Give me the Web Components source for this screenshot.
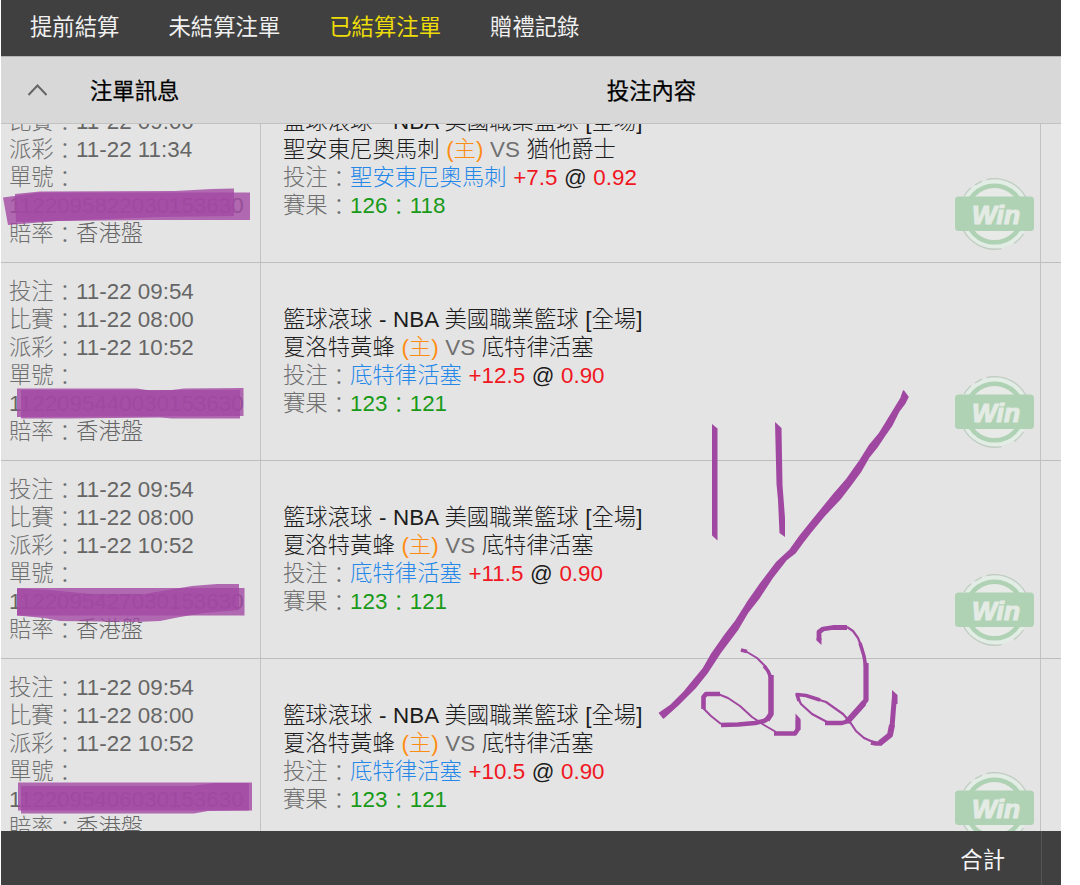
<!DOCTYPE html>
<html lang="zh-Hant">
<head>
<meta charset="utf-8">
<title>已結算注單</title>
<style>
    body {
        margin: 0;
        background: #fff;
        font: 22.36px/28px "Liberation Sans", "Noto Sans CJK TC", sans-serif;
    }
</style>
</head>
<body>
<bet-history>
    <tab-bar slot="tabs">
        <tab-item>提前結算</tab-item>
        <tab-item>未結算注單</tab-item>
        <tab-item active>已結算注單</tab-item>
        <tab-item>贈禮記錄</tab-item>
    </tab-bar>
    <table-head slot="head">
        <span slot="info">注單訊息</span>
        <span slot="content">投注內容</span>
    </table-head>
    <bet-row start="09:00" settle="11:34" number="1122095822030153630" home="聖安東尼奧馬刺" away="猶他爵士" pick="聖安東尼奧馬刺" line="+7.5" odds="0.92" score="126：118"></bet-row>
    <bet-row placed="09:54" start="08:00" settle="10:52" number="1122095440030153630" home="夏洛特黃蜂" away="底特律活塞" pick="底特律活塞" line="+12.5" odds="0.90" score="123：121"></bet-row>
    <bet-row placed="09:54" start="08:00" settle="10:52" number="1122095427030153630" home="夏洛特黃蜂" away="底特律活塞" pick="底特律活塞" line="+11.5" odds="0.90" score="123：121"></bet-row>
    <bet-row placed="09:54" start="08:00" settle="10:52" number="1122095406030153630" home="夏洛特黃蜂" away="底特律活塞" pick="底特律活塞" line="+10.5" odds="0.90" score="123：121"></bet-row>
    <total-bar slot="total">合計</total-bar>
</bet-history>
<marker-ink></marker-ink>

<script>
function define(name, html, setup) {
    const tmp = document.createElement('template');
    tmp.innerHTML = html;

    customElements.define(name, class extends HTMLElement {
        constructor() {
            super();
            this.attachShadow({mode: 'open'});
            this.shadowRoot.appendChild(document.importNode(tmp.content, true));
        }

        connectedCallback() {
            if (setup) {
                setup(this, this.shadowRoot);
            }
        }
    });
}

define('bet-history', `
    <style>
        :host {
            display: flex;
            flex-direction: column;
            width: 1060px;
            height: 885px;
            margin-left: 1px;
            background: #e4e4e4;
            overflow: hidden;
        }
        .rows {
            flex: 1;
            min-height: 0;
            overflow: hidden;
        }
        /* the list is scrolled a little into its first row */
        .list {
            margin-top: -59px;
        }
    </style>
    <slot name="tabs"></slot>
    <slot name="head"></slot>
    <div class="rows"><div class="list"><slot></slot></div></div>
    <slot name="total"></slot>
`);

define('tab-bar', `
    <style>
        :host {
            display: flex;
            flex: none;
            align-items: center;
            gap: 49px;
            height: 56px;
            padding: 0 29px;
            box-sizing: border-box;
            background: #404040;
        }
    </style>
    <slot></slot>
`);

define('tab-item', `
    <style>
        :host {
            display: block;
            color: #f0f0f0;
            font-weight: 400;
        }
        :host([active]) {
            color: #ecdc08;
        }
    </style>
    <slot></slot>
`);

define('table-head', `
    <style>
        :host {
            display: grid;
            grid-template-columns: 261px 779px 20px;
            flex: none;
            align-items: center;
            height: 68px;
            box-sizing: border-box;
            background: #d8d8d8;
            border-top: 1px solid #b4b4b4;
            border-bottom: 1px solid #c2c2c2;
            color: #000;
            font-weight: 400;
            -webkit-text-stroke: .25px #000;
        }
        .info {
            display: flex;
            align-items: center;
            gap: 42px;
            padding: 3px 0 0 26px;
        }
        .content {
            padding-top: 3px;
            text-align: center;
        }
        svg {
            display: block;
            margin-top: -3px;
        }
    </style>
    <div class="info">
        <svg width="21" height="14" viewBox="0 0 21 14"><path d="M1.5 12 L10.5 2.5 L19.5 12" fill="none" stroke="#666" stroke-width="2"/></svg>
        <slot name="info"></slot>
    </div>
    <div class="content"><slot name="content"></slot></div>
`);

define('win-stamp', `
    <style>
        :host {
            display: block;
            width: 80px;
            height: 72px;
        }
        svg {
            display: block;
        }
    </style>
    <svg width="80" height="72" viewBox="0 0 80 72">
        <circle cx="39.5" cy="36" r="32.5" fill="none" stroke="#e2eee5" stroke-width="4"/>
        <circle cx="39.5" cy="36" r="26" fill="#e7eae7"/>
        <circle cx="39.5" cy="36" r="28.3" fill="none" stroke="#b0d2b4" stroke-width="4.6"/>
        <path d="M31.5 1.6 A35.3 35.3 0 0 1 72.500 23 M68.500 56 A35.3 35.3 0 0 1 59 65.4 M46.5 70.6 A35.3 35.3 0 0 1 7.5 50 M9 18 A35.3 35.3 0 0 1 16 9.8 M20 6.8 L27 3.2" fill="none" stroke="#c0cdc2" stroke-width="1.3"/>
        <rect x="0" y="18.5" width="79" height="34.5" rx="3.5" fill="#b0d2b4"/>
        <text x="41" y="45.5" text-anchor="middle" textLength="48" lengthAdjust="spacingAndGlyphs" font-family="Liberation Sans, sans-serif" font-size="25.5" font-weight="700" font-style="italic" fill="#e4ebe5" stroke="#e4ebe5" stroke-width="1.2">Win</text>
    </svg>
`);

define('bet-row', `
    <style>
        :host {
            display: grid;
            grid-template-columns: 260px 780px 20px;
            height: 198px;
            box-sizing: border-box;
            border-bottom: 1px solid #bebebe;
            color: #707070;
            font-weight: 300;
            white-space: nowrap;
        }
        .info, .content {
            border-right: 1px solid #c2c2c2;
        }
        .info {
            display: flex;
            flex-direction: column;
            justify-content: flex-end;
            padding: 0 0 14px 8px;
        }
        .num {
            color: #666;
        }
        .content {
            display: flex;
            justify-content: space-between;
            padding-left: 22px;
            word-spacing: .4px;
        }
        .lines {
            align-self: center;
        }
        win-stamp {
            align-self: flex-end;
            margin: 0 5px 12px 0;
        }
        /* full-width colon sits lower, on the digits' line */
        i {
            font-style: normal;
            line-height: 0;
            vertical-align: -2px;
        }
        .dark { color: #1c1c1c; }
        .host { color: #ff8c12; }
        .pick { color: #2587e8; }
        .red { color: #f01622; }
        .score { color: #189a18; }
    </style>
    <div class="info">
        <div id="placedLine">投注<i>：</i><span class="num">11-22 <span data-f="placed"></span></span></div>
        <div>比賽<i>：</i><span class="num">11-22 <span data-f="start"></span></span></div>
        <div>派彩<i>：</i><span class="num">11-22 <span data-f="settle"></span></span></div>
        <div>單號<i>：</i></div>
        <div class="num" data-f="number"></div>
        <div>賠率<i>：</i><span class="num">香港盤</span></div>
    </div>
    <div class="content">
        <div class="lines">
            <div class="dark">籃球滾球 - NBA 美國職業籃球 [全場]</div>
            <div><span class="dark" data-f="home"></span> <span class="host">(主)</span> VS <span class="dark" data-f="away"></span></div>
            <div>投注<i>：</i><span class="pick" data-f="pick"></span> <span class="red" data-f="line"></span> <span class="dark">@</span> <span class="red" data-f="odds"></span></div>
            <div>賽果<i>：</i><span class="score"><span id="a"></span><i>：</i><span id="b"></span></span></div>
        </div>
        <win-stamp></win-stamp>
    </div>
`, (el, root) => {
    root.querySelectorAll('[data-f]').forEach(n => {
        n.textContent = el.getAttribute(n.dataset.f) || '';
    });

    const [a, b] = el.getAttribute('score').split('：');
    root.querySelector('#a').textContent = a;
    root.querySelector('#b').textContent = b;

    if (!el.hasAttribute('placed')) {
        root.querySelector('#placedLine').remove();
    }
});

define('total-bar', `
    <style>
        :host {
            display: grid;
            grid-template-columns: 1fr 19px;
            flex: none;
            height: 54px;
            background: #404040;
            color: #f4f4f4;
            font-weight: 400;
        }
        .label {
            display: flex;
            align-items: center;
            justify-content: flex-end;
            padding: 6px 36px 0 0;
            border-right: 1px solid #555;
        }
    </style>
    <div class="label"><slot></slot></div>
`);

// hand-drawn marker strokes lying over the whole list
define('marker-ink', `
    <style>
        :host {
            position: absolute;
            left: 0;
            top: 0;
            width: 1080px;
            height: 885px;
            pointer-events: none;
        }
        svg {
            display: block;
        }
    </style>
    <svg width="1080" height="885" viewBox="0 0 1080 885">
        <g fill="#a349a4" fill-opacity=".8">
            <path d="M3 197.5 L40 192.5 L250 192.5 V220 L148 220 L57 221 L8 225 Z"/>
            <path d="M15 194 L40 191.5 L175 191 L212 189 L234 188.5 V216 L160 217 L57 221 L16 222 Z"/>
            <path d="M17 388.5 L137 388.5 L150 390.5 L172 390 L184 388.5 L243.5 388 V416 L17 417 Z"/>
            <path d="M21 390 H240 V418.5 L172 418.5 L160 417.5 L68 418.5 L21 418.5 Z"/>
            <path d="M17 588 H244.5 V615.5 H17 Z"/>
            <path d="M17 588.5 L50 590 L90 594 L145 594 L168 590 L192 586 L217 584 H239 V610 L204 613 L180 617 L160 621 L135 622 L60 621 L44 618 L17 615.5 Z"/>
            <path d="M18 782.5 H252 V810.5 H18 Z"/>
            <path d="M21 786 L192 786 L214 783 L249 783 V810.5 L208 811 L194 813.5 H21 Z"/>
        </g>
        <g fill="#a048a1">
            <path d="M712 424 L717.5 428.5 V540.5 L712 535.5 Z"/>
            <path d="M775 422 L781.5 428 L782.5 485 L785 518 V537 L779.5 533 L778 500 L776.5 484 Z"/>
            <path stroke="#a048a1" stroke-width="1.4" stroke-linejoin="round" d="M903.5 391 L908 397 L905 403 L899 411 L892 425 L885 435 L877 447 L869 457 L861 471 L850 486 L840 499 L824 516 L810 533 L803 542 L795 553 L786 560 L772 578 L759 598 L748 612 L738 629 L720 653 L707 673 L695 688 L678 705 L663.5 718 L659.5 713 L671 705 L684 692 L703 669 L711 655 L725 635 L735 622 L747 603 L761 583 L777 562 L790 550 L800 536 L812 521 L834 494 L847 479 L859 462 L869 446 L879 434 L887 421 L901 398 Z"/>
        </g>
        <g fill="none" stroke="#a048a1" stroke-linejoin="round">
            <path stroke-width="2" d="M741 650 L747 652 L757 658 L766 667 L770 675 M721 724 L711 716 L703 708 M718 694 L728 698 L740 706 L752 717 L764 725 L776 732"/>
            <path stroke-width="3.5" d="M741 650 L747 651.5 M764 666 L768 671 L771 678"/>
            <path stroke-width="5.5" d="M771 675 V714 L767 720"/>
            <path stroke-width="4.6" d="M769 718 L764 721 L755 723 L738 724.5 L721 725 M703.5 709 V697 L706 694 H720 M774 733.5 H795 L798 729 V720"/>
            <path fill="#a048a1" stroke="none" d="M795.5 713.5 L800.5 719 V730 H795.5 Z"/>
            <path stroke-width="4.8" d="M819 640 V632 L823 629 L833 627.5 H847"/>
            <path fill="#a048a1" stroke="none" d="M816.5 638 H821.5 V645 L816.5 640.5 Z"/>
            <path stroke-width="2.2" d="M847 627 L853 631 L858 638 L862 648 L865 663 M827 722 L812 714 L801 704 L798 698 M804 695 L826 702 L843 714 L850 722 L856 731 L864 738 L873 742"/>
            <path stroke-width="3.5" d="M860 643 L864 656 L866 668 M799 701 L797 694.5 L806 695.5 L820 700"/>
            <path stroke-width="5.2" d="M866 663 V700 L859 709"/>
            <path stroke-width="6" d="M864 703 L847 722"/>
            <path stroke-width="4.4" d="M849 721 L842 723 H825 M871 742.5 L876 743.5 H882"/>
            <path stroke-width="6" d="M880 743 L890 735 L892 725"/>
            <path stroke-width="5" d="M892 727 L894.5 696"/>
            <path fill="#a048a1" stroke="none" d="M892 690 L897.5 695 V704 H892 Z"/>
        </g>
    </svg>
`);
</script>
</body>
</html>
